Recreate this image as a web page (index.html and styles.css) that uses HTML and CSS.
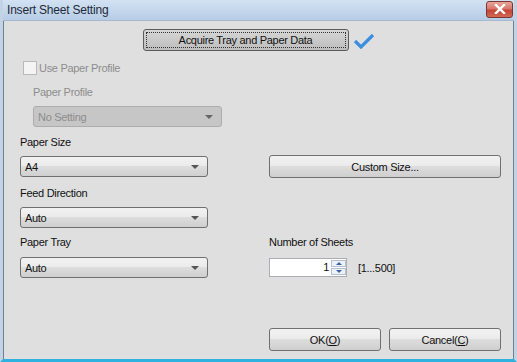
FILE: index.html
```html
<!DOCTYPE html>
<html lang="en">
<head>
  <meta charset="UTF-8">
  <title>Insert Sheet Setting</title>
  <link rel="stylesheet" href="styles.css">
</head>
<body>
  <div class="window">
    <div class="titlebar">
      <span class="title">Insert Sheet Setting</span>
      <div class="close-btn">
        <svg width="12" height="10" viewBox="0 0 12 10">
          <path d="M2 1 L10 9 M10 1 L2 9" stroke="#fff" stroke-width="2.4" stroke-linecap="square"/>
        </svg>
      </div>
    </div>

    <div class="content">
      <div class="acquire-row">
        <button class="btn btn-focus acquire-btn"><span>Acquire Tray and Paper Data</span></button>
        <svg class="check" width="22" height="16" viewBox="0 0 22 16">
          <path d="M2 8 L8 14 L20 2" fill="none" stroke="#3b8fde" stroke-width="3.2"/>
        </svg>
      </div>

      <label class="check-row disabled">
        <span class="checkbox"></span>
        <span>Use Paper Profile</span>
      </label>

      <div class="profile">
        <div class="label disabled">Paper Profile</div>
        <div class="select select-disabled">
          <span>No Setting</span>
          <span class="arrow"></span>
        </div>
      </div>

      <div class="label">Paper Size</div>
      <div class="row row-size">
        <div class="select">
          <span>A4</span>
          <span class="arrow"></span>
        </div>
        <button class="btn custom-btn">Custom Size...</button>
      </div>

      <div class="label">Feed Direction</div>
      <div class="row">
        <div class="select">
          <span>Auto</span>
          <span class="arrow"></span>
        </div>
      </div>

      <div class="row row-labels">
        <div class="label col-left">Paper Tray</div>
        <div class="label">Number of Sheets</div>
      </div>
      <div class="row row-tray">
        <div class="select">
          <span>Auto</span>
          <span class="arrow"></span>
        </div>
        <div class="sheets">
          <div class="spinner">
            <span class="spin-value">1</span>
            <div class="spin-btns">
              <span class="spin-up"></span>
              <span class="spin-down"></span>
            </div>
          </div>
          <span class="range">[1...500]</span>
        </div>
      </div>

      <div class="row footer">
        <button class="btn foot-btn">OK(<u>O</u>)</button>
        <button class="btn foot-btn">Cancel(<u>C</u>)</button>
      </div>
    </div>
  </div>
</body>
</html>
```

FILE: styles.css
```css
body {
  margin: 0;
  font-family: "Liberation Sans", Arial, sans-serif;
  font-size: 11px;
  letter-spacing: -0.3px;
  color: #111;
  background: #dfdfdf;
}
.window {
  width: 517px;
  height: 362px;
  box-sizing: border-box;
  background: #dfdfdf;
  border-left: 3px solid #c3d3e6;
  border-right: 3px solid #c3d3e6;
  border-bottom: 3px solid #2fb2e0;
  box-shadow: inset 1px 0 0 #6e7f96, inset -1px 0 0 #6e7f96;
  overflow: hidden;
}
.titlebar {
  height: 21px;
  margin: 0 -3px;
  padding: 0 4px 0 7px;
  display: flex;
  align-items: center;
  justify-content: space-between;
  background: linear-gradient(#d3e2f3, #b6cce6);
  border-bottom: 1px solid #a7b9cf;
  box-sizing: border-box;
}
.title {
  font-size: 12px;
  color: #1e2a3a;
  letter-spacing: -0.2px;
}
.close-btn {
  width: 27px;
  height: 17px;
  margin-top: -2px;
  border: 1px solid #7a3631;
  border-radius: 3px;
  box-sizing: border-box;
  background: linear-gradient(#e9a69c 0%, #d7776b 45%, #c44334 55%, #d36a54 100%);
  display: flex;
  align-items: center;
  justify-content: center;
}
.content {
  padding: 8px 0 0 17px;
}
.btn {
  font-family: inherit;
  font-size: 11px;
  letter-spacing: -0.3px;
  color: #111;
  height: 22px;
  padding: 0;
  border: 1px solid #707070;
  border-radius: 3px;
  background: linear-gradient(#f2f2f2 0%, #ebebeb 45%, #dddddd 50%, #cfcfcf 100%);
  box-sizing: border-box;
}
.btn-focus {
  background: linear-gradient(#d6d6d6, #bdbdbd);
  border-color: #5c5c5c;
  padding: 2px;
}
.btn-focus span {
  display: flex;
  align-items: center;
  justify-content: center;
  height: 100%;
  border: 1px dotted #333;
  box-sizing: border-box;
}
.acquire-row {
  display: flex;
  align-items: center;
  justify-content: center;
  gap: 4px;
  margin-left: -17px;
  height: 22px;
}
.acquire-btn {
  width: 206px;
}
.check {
  margin-top: 1px;
}
.disabled {
  color: #8d8d8d;
}
.check-row {
  display: flex;
  align-items: center;
  gap: 2px;
  margin: 10px 0 0 3px;
  height: 14px;
}
.checkbox {
  width: 12px;
  height: 12px;
  border: 1px solid #b9b9b9;
  background: #f4f4f4;
}
.profile {
  margin-left: 13px;
}
.label {
  height: 14px;
  line-height: 14px;
  margin-top: 8px;
}
.profile .label {
  margin-top: 10px;
}
.select {
  width: 188px;
  height: 21px;
  box-sizing: border-box;
  border: 1px solid #707070;
  border-radius: 3px;
  background: linear-gradient(#f2f2f2 0%, #ebebeb 45%, #dddddd 50%, #cfcfcf 100%);
  display: flex;
  align-items: center;
  justify-content: space-between;
  padding: 0 8px 0 4px;
  margin-top: 7px;
}
.select-disabled {
  width: 189px;
  background: #c6c6c6;
  border-color: #adadad;
  color: #8d8d8d;
}
.arrow {
  width: 0;
  height: 0;
  border-left: 4px solid transparent;
  border-right: 4px solid transparent;
  border-top: 4px solid #555;
}
.select-disabled .arrow {
  border-top-color: #666;
}
.row {
  display: flex;
  align-items: center;
}
.row-size .select,
.row-tray .select {
  margin-top: 0;
}
.row-size {
  margin-top: 6px;
}
.custom-btn {
  width: 232px;
  height: 23px;
  margin-left: 61px;
}
.row-labels .label {
  margin-top: 7px;
}
.col-left {
  width: 249px;
}
.row-tray {
  margin-top: 8px;
}
.sheets {
  display: flex;
  align-items: center;
  margin-left: 61px;
}
.spinner {
  width: 78px;
  height: 19px;
  box-sizing: border-box;
  border: 1px solid #abadb3;
  background: #fff;
  display: flex;
  align-items: stretch;
}
.spin-value {
  flex: 1;
  text-align: right;
  line-height: 17px;
  padding-right: 2px;
}
.spin-btns {
  width: 15px;
  display: flex;
  flex-direction: column;
  gap: 1px;
  padding: 1px 0;
}
.spin-up,
.spin-down {
  flex: 1;
  border: 1px solid #b4c1d3;
  background: #edf0f5;
  display: flex;
  align-items: center;
  justify-content: center;
}
.spin-up::after {
  content: "";
  border-left: 3px solid transparent;
  border-right: 3px solid transparent;
  border-bottom: 3px solid #3a64a5;
}
.spin-down::after {
  content: "";
  border-left: 3px solid transparent;
  border-right: 3px solid transparent;
  border-top: 3px solid #3a64a5;
}
.range {
  margin-left: 11px;
}
.footer {
  margin-top: 50px;
  margin-left: 249px;
  gap: 8px;
}
.foot-btn {
  width: 112px;
  height: 23px;
}
```
